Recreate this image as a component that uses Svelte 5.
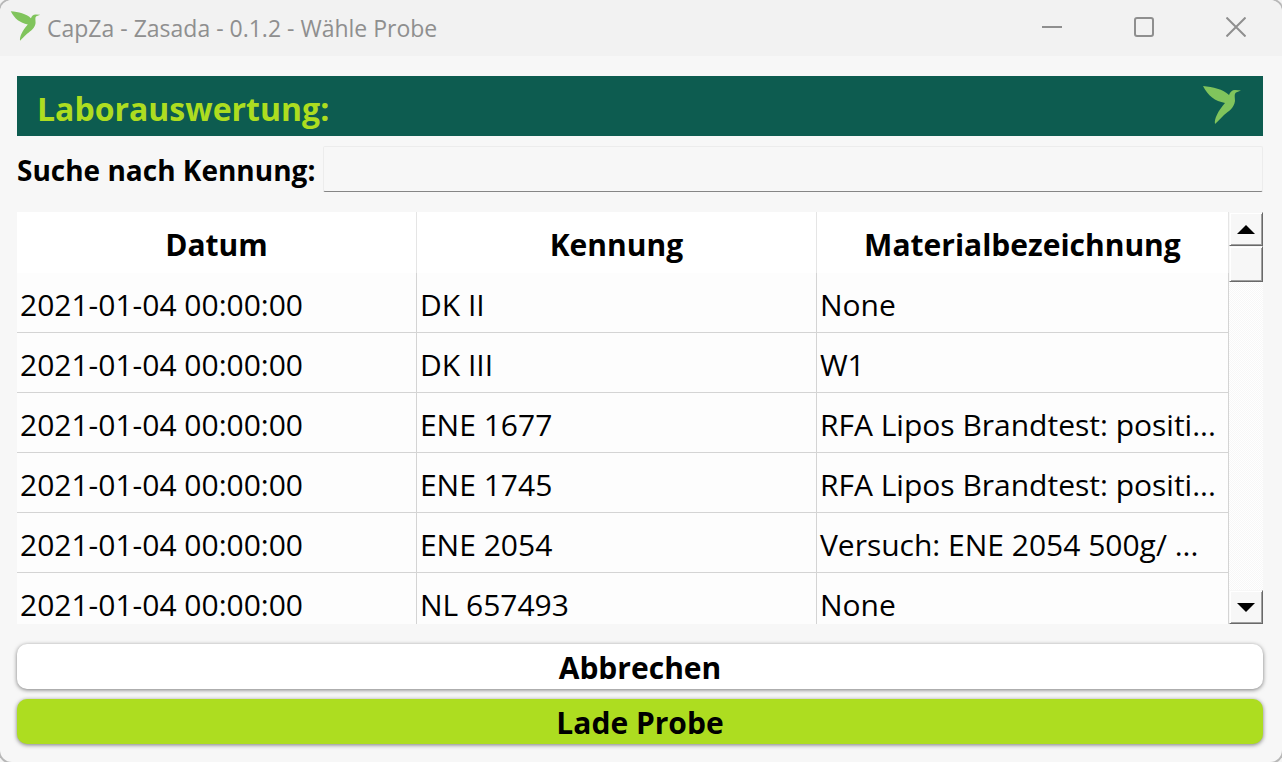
<script lang="ts">
  const rows = [
    ['2021-01-04 00:00:00', 'DK II', 'None'],
    ['2021-01-04 00:00:00', 'DK III', 'W1'],
    ['2021-01-04 00:00:00', 'ENE 1677', 'RFA Lipos Brandtest: positi...'],
    ['2021-01-04 00:00:00', 'ENE 1745', 'RFA Lipos Brandtest: positi...'],
    ['2021-01-04 00:00:00', 'ENE 2054', 'Versuch: ENE 2054 500g/ ...'],
    ['2021-01-04 00:00:00', 'NL 657493', 'None']
  ];
  let search = $state('');
</script>

{#snippet bird()}
  <svg class="bird" viewBox="0 0 40 40" aria-hidden="true">
    <path d="M1 1C11 2 21 4 27 10C28 7 30 5 33 5L39 5.500L34 7.500C32 9 33 12 33 16C32 23 27 26 22 30C18 34 16 36 13 39C12 34 16 26 23 18C13 16 6 11 1 1Z" fill="#80c45c" />
  </svg>
{/snippet}

<div class="window">
  <header class="titlebar">
    {@render bird()}
    <span class="title">CapZa - Zasada - 0.1.2 - Wähle Probe</span>
    <div class="controls">
      <button aria-label="Minimieren"><svg viewBox="0 0 20 20"><path d="M0 10H20" /></svg></button>
      <button aria-label="Maximieren"><svg viewBox="0 0 20 20"><rect x="1" y="1" width="18" height="18" rx="2" /></svg></button>
      <button aria-label="Schließen"><svg viewBox="0 0 20 20"><path d="M0.500 0.500L19.500 19.500M19.500 0.500L0.500 19.500" /></svg></button>
    </div>
  </header>

  <main>
    <div class="banner">
      <h1>Laborauswertung:</h1>
      {@render bird()}
    </div>

    <div class="search">
      <label for="search">Suche nach Kennung:</label>
      <input id="search" type="text" bind:value={search} />
    </div>

    <div class="list">
      <div class="viewport">
        <table>
          <thead>
            <tr><th>Datum</th><th>Kennung</th><th>Materialbezeichnung</th></tr>
          </thead>
          <tbody>
            {#each rows as row}
              <tr>{#each row as cell}<td>{cell}</td>{/each}</tr>
            {/each}
          </tbody>
        </table>
      </div>
      <div class="scrollbar">
        <button class="raised" aria-label="Nach oben"><svg viewBox="0 0 18 9"><path d="M0 9L9 0L18 9Z" /></svg></button>
        <div class="raised thumb"></div>
        <button class="raised down" aria-label="Nach unten"><svg viewBox="0 0 18 9"><path d="M0 0L9 9L18 0Z" /></svg></button>
      </div>
    </div>

    <div class="actions">
      <button>Abbrechen</button>
      <button class="primary">Lade Probe</button>
    </div>
  </main>
</div>

<style>
  :global(body) {
    margin: 0;
    background: #f4f4f4;
  }
  .window {
    display: flex;
    flex-direction: column;
    height: 100vh;
    overflow: hidden;
    border-radius: 12px;
    background: #f7f7f7;
    box-shadow: 0 0 0 2px #b8b8b8;
    color: #000;
    font-family: 'Open Sans', 'Noto Sans', sans-serif;
    font-size: 30px;
  }
  button {
    margin: 0;
    padding: 0;
    border: 0;
    background: none;
    color: inherit;
    font: inherit;
  }
  .titlebar {
    display: flex;
    align-items: center;
    height: 56px;
    padding-left: 10px;
    background: #f2f2f2;
    color: #8f8f8f;
    font-size: 23px;
  }
  .titlebar .bird {
    width: 31px;
    height: 32px;
    margin-bottom: 4px;
  }
  .title {
    flex: 1;
    padding-left: 6px;
    white-space: nowrap;
  }
  .controls {
    display: flex;
    align-self: stretch;
  }
  .controls button {
    display: grid;
    place-items: center;
    width: 92px;
    height: 54px;
  }
  .controls svg {
    width: 20px;
    height: 20px;
    fill: none;
    stroke: #8f8f8f;
    stroke-width: 2;
  }
  main {
    flex: 1;
    display: flex;
    flex-direction: column;
    min-height: 0;
    padding: 20px 19px 18px 17px;
  }
  .banner {
    display: flex;
    align-items: center;
    justify-content: space-between;
    height: 60px;
    padding: 0 21px 0 20px;
    background: #0d5c50;
    color: #addd20;
  }
  h1 {
    margin: 0;
    padding-top: 6px;
    font-size: 32px;
    line-height: 60px;
  }
  .banner .bird {
    width: 40px;
    height: 40px;
    margin-bottom: 2px;
  }
  .search {
    display: flex;
    align-items: center;
    gap: 8px;
    margin: 10px 0 20px;
    font-size: 28px;
    font-weight: 700;
  }
  label {
    padding-top: 2px;
    white-space: nowrap;
  }
  input {
    flex: 1;
    box-sizing: border-box;
    min-width: 0;
    height: 46px;
    padding: 0 8px;
    border: 1px solid #ececec;
    border-bottom-color: #868686;
    border-radius: 2px;
    background: #f7f7f7;
    font: inherit;
    outline: none;
  }
  .list {
    flex: 1;
    display: flex;
    min-height: 0;
  }
  .viewport {
    flex: 1;
    overflow: hidden;
    background: #fdfdfd;
  }
  table {
    width: 100%;
    table-layout: fixed;
    border-collapse: separate;
    border-spacing: 0;
  }
  th, td {
    box-sizing: border-box;
    height: 60px;
    overflow: hidden;
    border-right: 1px solid #d4d4d4;
    text-overflow: ellipsis;
    white-space: nowrap;
  }
  th {
    height: 61px;
    padding: 4px 0 0;
    border-right-color: #e5e5e5;
    background: #fff;
    font-weight: 700;
  }
  th:not(:last-child) {
    width: 33%;
  }
  td {
    padding: 4px 3px 0;
    border-bottom: 1px solid #d4d4d4;
    line-height: 55px;
  }
  .scrollbar {
    display: flex;
    flex-direction: column;
    width: 34px;
    background: repeating-conic-gradient(#f7f7f7 0 25%, #fff 0 50%) 0 0 / 2px 2px;
  }
  .raised {
    display: grid;
    place-items: center;
    box-sizing: border-box;
    width: 34px;
    height: 34px;
    border: 1px solid #f7f7f7;
    border-right-color: #696969;
    border-bottom-color: #696969;
    background: #f7f7f7;
    box-shadow: inset 1px 1px #fff, inset -1px -1px #a0a0a0;
  }
  .thumb {
    height: 36px;
  }
  .down {
    margin-top: auto;
  }
  .raised svg {
    width: 18px;
    height: 9px;
  }
  .actions {
    display: grid;
    gap: 10px;
    margin-top: 20px;
  }
  .actions button {
    height: 45px;
    padding-top: 3px;
    border-radius: 10px;
    background: #fff;
    box-shadow: 0 1px 4px rgba(0, 0, 0, 0.5);
    font-weight: 700;
    line-height: 42px;
  }
  .actions .primary {
    background: #addd20;
  }
</style>
